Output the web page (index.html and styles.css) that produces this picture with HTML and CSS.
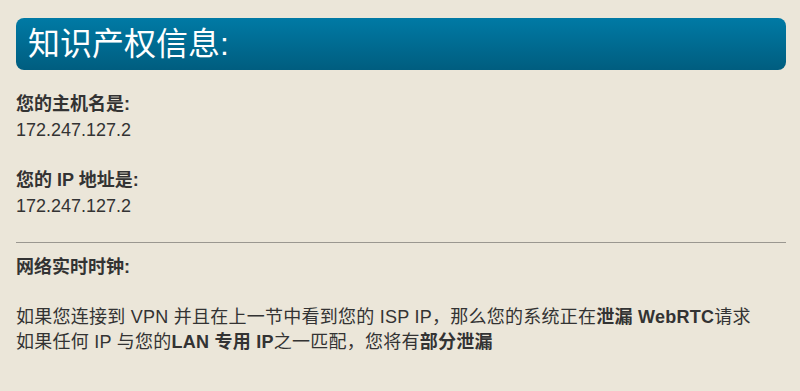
FILE: index.html
```html
<!DOCTYPE html>
<html>
<head>
	<meta charset="utf-8">
	<title>知识产权信息</title>
	<link rel="stylesheet" href="styles.css">
</head>
<body>
	<div class="wrap">
		<h1 class="title">知识产权信息:</h1>
		<div class="item">
			<b>您的主机名是:</b>
			<div>172.247.127.2</div>
		</div>
		<div class="item">
			<b>您的 IP 地址是:</b>
			<div>172.247.127.2</div>
		</div>
		<hr>
		<div class="item clock">
			<b>网络实时时钟:</b>
		</div>
		<div class="note">
			如果您连接到 VPN 并且在上一节中看到您的 ISP IP，那么您的系统正在<b>泄漏 WebRTC</b>请求<br>
			如果任何 IP 与您的<b>LAN 专用 IP</b>之一匹配，您将有<b>部分泄漏</b>
		</div>
	</div>
</body>
</html>
```

FILE: styles.css
```css
body{
	margin: 0;
	background-color: #ebe6d9;
	color: #333;
	font-family: "Liberation Sans", Arial, "Noto Sans CJK SC", sans-serif;
	font-size: 18px;
	line-height: 25.5px;
}
.wrap{
	padding: 18px 14px 0 16px;
}
.title{
	margin: 0 0 22px;
	height: 52px;
	padding-left: 12px;
	background: linear-gradient(#007aa5, #005d7f);
	border-radius: 8px;
	color: #fff;
	font-size: 32px;
	font-weight: normal;
	line-height: 52px;
}
.item{
	margin-bottom: 25px;
}
.item b{
	display: block;
}
hr{
	margin: -2px 0 12px;
	border: none;
	border-top: 1px solid #9a9790;
}
.clock{
	margin-bottom: 24px;
}
.note{
	letter-spacing: 0.25px;
}
```
